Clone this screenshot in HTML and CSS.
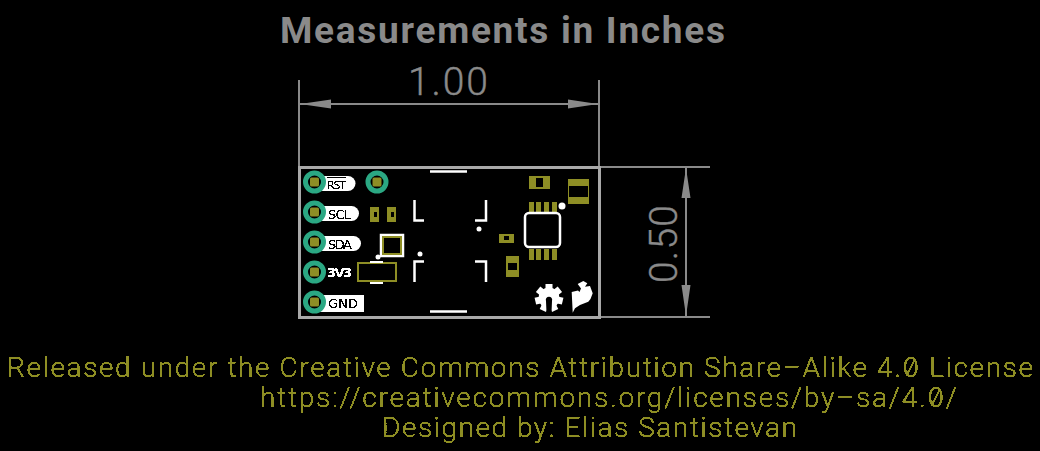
FILE: index.html
```html
<!DOCTYPE html>
<html lang="en">
<head>
    <meta charset="UTF-8">
    <title>Measurements in Inches</title>
    <link rel="stylesheet" href="styles.css">
</head>
<body>
<svg class="drawing" width="1040" height="451" viewBox="0 0 1040 451">
    <defs>
        <filter id="crisp" x="0" y="0" width="100%" height="100%">
            <feComponentTransfer>
                <feFuncA type="discrete" tableValues="0 0 1 1 1"/>
            </feComponentTransfer>
        </filter>
        <rect id="tooth" x="-3.500" y="-14" width="7" height="6"/>
    </defs>

    <!-- dimensions -->
    <text class="title" x="280" y="43" textLength="445">Measurements in Inches</text>
    <text class="dim-text" x="408" y="95" textLength="80">1.00</text>
    <text class="dim-text" transform="translate(677 283) rotate(-90)" textLength="78">0.50</text>

    <path class="dim-line" d="M299 80V167M599 80V167M300 104H598M600 167H710M600 317H710M686 168V317"/>
    <path class="dim-arrow" d="M300 104L331 99.500V108.500ZM598 104L568 99.500V108.500ZM686 168L681.500 198H690.500ZM686 316L681.500 285H690.500Z"/>

    <!-- board -->
    <rect class="board" x="299.500" y="167.500" width="300" height="150"/>

    <!-- labels -->
    <path class="silk" d="M320 176H348A7.500 7.500 0 0 1 348 191H320Z"/>
    <path class="silk" d="M320 206H351.500A7.500 7.500 0 0 1 351.500 221H320Z"/>
    <path class="silk" d="M320 236H353.500A7.500 7.500 0 0 1 353.500 251H320Z"/>
    <rect class="silk" x="320" y="295" width="44" height="17"/>
    <path class="label-bar" d="M327 177.500H346"/>
    <text class="label small" x="327" y="189" textLength="19">RST</text>
    <text class="label" x="328" y="218.500" textLength="23">SCL</text>
    <text class="label" x="328" y="248.500" textLength="24">SDA</text>
    <text class="label white" x="327" y="277" textLength="25">3V3</text>
    <text class="label" x="328" y="308" textLength="30">GND</text>

    <!-- pads -->
    <g class="pad" transform="translate(314.500 182)"><circle class="ring" r="9"/><rect class="hole" x="-4.500" y="-4.500" width="9" height="9" rx="1.500"/></g>
    <g class="pad" transform="translate(314.500 212)"><circle class="ring" r="9"/><rect class="hole" x="-4.500" y="-4.500" width="9" height="9" rx="1.500"/></g>
    <g class="pad" transform="translate(314.500 242)"><circle class="ring" r="9"/><rect class="hole" x="-4.500" y="-4.500" width="9" height="9" rx="1.500"/></g>
    <g class="pad" transform="translate(314.500 272)"><circle class="ring" r="9"/><rect class="hole" x="-4.500" y="-4.500" width="9" height="9" rx="1.500"/></g>
    <g class="pad" transform="translate(314.500 302)"><circle class="ring" r="9"/><rect class="hole" x="-4.500" y="-4.500" width="9" height="9" rx="1.500"/></g>
    <g class="pad" transform="translate(377 182)"><circle class="ring" r="9"/><rect class="hole" x="-4.500" y="-4.500" width="9" height="9" rx="1.500"/></g>

    <!-- left parts -->
    <path class="copper" fill-rule="evenodd" d="M370 207H379V222H370ZM374 212V217H377V212Z"/>
    <path class="copper" fill-rule="evenodd" d="M387 207H396V222H387ZM391 212V217H394V212Z"/>
    <rect class="white-line" x="381" y="235" width="22" height="21"/>
    <rect class="copper-line" x="383" y="237" width="18" height="17"/>
    <circle class="dot" cx="378" cy="257" r="2.500"/>
    <rect class="copper-line" x="358" y="263" width="38" height="18"/>
    <rect class="dot" x="370" y="261" width="13" height="2"/>
    <rect class="dot" x="370" y="282" width="13" height="2"/>

    <!-- chip outline -->
    <path class="white-line" d="M430 171.500H467M430 311.500H467"/>
    <path class="white-line" d="M414.500 200V220.500H424M414.500 282V261.500H424M486 200V220.500H475M486 282V261.500H475"/>
    <circle class="dot" cx="420" cy="254" r="2.500"/>
    <circle class="dot" cx="479" cy="229" r="2.500"/>

    <!-- right parts -->
    <path class="copper" fill-rule="evenodd" d="M529 176H550V189H529ZM536 178V187H543V178Z"/>
    <path class="copper" d="M568 179H589V186H568ZM568 197H589V204H568ZM568 186H569V197H568ZM588 186H589V197H588Z"/>
    <path class="copper" fill-rule="evenodd" d="M499 234H514V243H499ZM504 236V240H509V236Z"/>
    <path class="copper" fill-rule="evenodd" d="M506 256H519V277H506ZM508 263V270H517V263Z"/>
    <path class="copper" d="M529 202H534V212H529ZM536 202H541V212H536ZM544 202H549V212H544ZM552 202H557V212H552Z"/>
    <path class="copper" d="M529 249H534V260H529ZM536 249H541V260H536ZM544 249H549V260H544ZM552 249H557V260H552Z"/>
    <rect class="white-line" x="525" y="213" width="35" height="34" rx="4"/>
    <circle class="dot" cx="562" cy="206" r="3.500"/>

    <!-- logos -->
    <g transform="translate(549 298)">
        <circle class="dot" r="10.500"/>
        <use class="dot" href="#tooth"/>
        <use class="dot" href="#tooth" transform="rotate(51)"/>
        <use class="dot" href="#tooth" transform="rotate(103)"/>
        <use class="dot" href="#tooth" transform="rotate(154)"/>
        <use class="dot" href="#tooth" transform="rotate(206)"/>
        <use class="dot" href="#tooth" transform="rotate(257)"/>
        <use class="dot" href="#tooth" transform="rotate(309)"/>
        <path class="cut" d="M-2.500 15L-3 3A3.200 3.200 0 1 1 3 3L2.500 15Z"/>
    </g>
    <path class="dot" d="M572.700 312.700L571.700 292L578 290.500L579.500 292L581 288.500L577.700 284L583.300 281L587.300 283.300L585 286.700L590 286L592.700 293.300L590.500 299L588.300 301.700L580 305L575 308.300Z"/>

    <!-- footer -->
    <g class="footer">
        <text x="7" y="377" textLength="1026">Released under the Creative Commons Attribution Share–Alike 4.<tspan class="zero">0</tspan> License</text>
        <text x="260" y="407" textLength="697">https://creativecommons.org/licenses/by–sa/4.<tspan class="zero">0</tspan>/</text>
        <text x="382" y="437" textLength="415">Designed by: Elias Santistevan</text>
    </g>
</svg>
</body>
</html>
```

FILE: styles.css
```css
html, body {
    margin: 0;
    background-color: black;
}
.drawing {
    display: block;
}
.title {
    font-family: "Roboto", sans-serif;
    font-size: 37px;
    font-weight: 700;
    fill: #8a8a8a;
}
.dim-text {
    font-family: "Roboto", sans-serif;
    font-size: 39px;
    font-weight: 300;
    fill: #8a8a8a;
    stroke: #8a8a8a;
    stroke-width: 0.4;
}
.dim-line {
    fill: none;
    stroke: #8a8a8a;
    stroke-width: 2;
    shape-rendering: crispEdges;
}
.dim-arrow {
    fill: #8a8a8a;
}
.board {
    fill: none;
    stroke: #a9a9a9;
    stroke-width: 3;
    shape-rendering: crispEdges;
}
.silk, .dot {
    fill: white;
}
.cut {
    fill: black;
}
.label {
    font-family: "DejaVu Sans", sans-serif;
    font-size: 13px;
    fill: black;
    filter: url(#crisp);
}
.label.small {
    font-size: 11px;
}
.label.white {
    font-weight: 700;
    fill: white;
}
.label-bar {
    stroke: black;
    stroke-width: 1;
}
.ring {
    fill: black;
    stroke: #2ba883;
    stroke-width: 5;
}
.hole {
    fill: #8e8e25;
}
.copper {
    fill: #8e8e25;
    shape-rendering: crispEdges;
}
.copper-line {
    fill: none;
    stroke: #8e8e25;
    stroke-width: 2;
    shape-rendering: crispEdges;
}
.white-line {
    fill: none;
    stroke: white;
    stroke-width: 2.5;
}
.footer {
    font-family: "Roboto", sans-serif;
    font-size: 28px;
    font-weight: 300;
    fill: #8e8e25;
    stroke: #8e8e25;
    stroke-width: 0.2;
    filter: url(#crisp);
}
.zero {
    font-family: "Inter", sans-serif;
    font-feature-settings: "zero";
    font-size: 27px;
    font-weight: 300;
}
```
